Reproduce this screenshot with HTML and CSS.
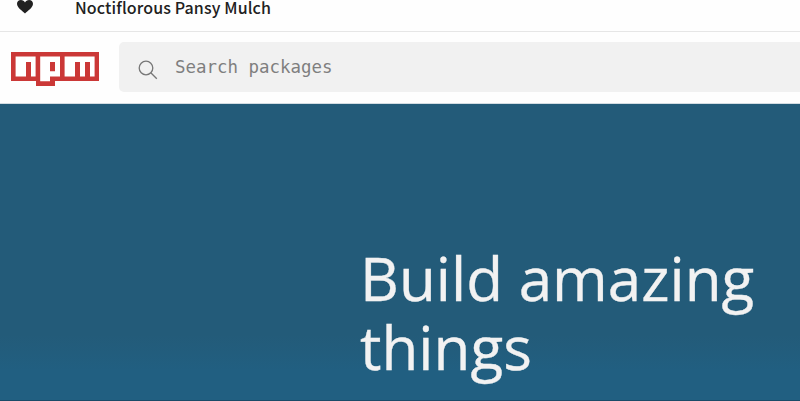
FILE: index.html
```html
<!DOCTYPE html>
<html lang="en">
<head>
<meta charset="utf-8">
<title>npm</title>
<link rel="stylesheet" href="styles.css">
</head>
<body>
<div class="topbar">
  <svg class="heart" viewBox="0 0 16 14"><path d="M8 13.5C5.5 11 0 7.8 0 3.8C0 1.5 1.7 0 3.9 0C5.8 0 7.4 1.2 8 2.5C8.6 1.2 10.2 0 12.1 0C14.3 0 16 1.5 16 3.8C16 7.8 10.5 11 8 13.5Z"/></svg>
  <span class="expansion">Noctiflorous Pansy Mulch</span>
</div>
<header class="header">
  <svg class="logo" viewBox="0 0 88 34" role="img" aria-label="npm"><path fill="#cb3837" d="M0 0h88v29H44v5H25v-5H0z"/><path fill="#fff" fill-rule="evenodd" d="M4.6 4.5H24.6V24.6H20V10H15V24.6H4.6zM29.2 4.5H49V24.6H39V29.3H29.2zM39 10V19.3H44V10zM53.6 4.5H83.6V24.6H79V10H74V24.6H69V10H64V24.6H53.6z"/></svg>
  <div class="search">
    <svg class="glass" viewBox="0 0 20 20"><circle cx="8" cy="8" r="6.8"/><path d="M12.8 12.8L18.8 18.8"/></svg>
    <span class="placeholder">Search packages</span>
  </div>
</header>
<main class="hero">
  <h1>Build amazing things</h1>
</main>
</body>
</html>
```
FILE: styles.css
```css
* { box-sizing: border-box; }
body { margin: 0; height: 401px; overflow: hidden; background: #fefefe; }
.topbar { display: flex; height: 32px; border-bottom: 1px solid #e6e6e6; padding-left: 17px; }
.heart { width: 16px; height: 14px; fill: #212121; margin: 0 42px 0 0; flex: none; }
.expansion { font: 500 16px/14px "Noto Sans CJK SC", sans-serif; letter-spacing: .12px; color: #212121; white-space: nowrap; }
.header { display: flex; height: 72px; padding: 10px 0 0 11px; border-bottom: 1px solid #d3dce2; }
.logo { width: 88px; height: 34px; margin: 10px 20px 0 0; flex: none; }
.search { display: flex; flex: 1; height: 50px; background: #f1f1f1; border-radius: 5px 0 0 5px; padding-left: 19px; }
.glass { width: 20px; height: 20px; margin: 17.5px 17px 0 0; fill: none; stroke: #777; stroke-width: 1.3; flex: none; }
.placeholder { font: 17.45px/50px "DejaVu Sans Mono", monospace; color: #7f7f7f; white-space: nowrap; }
.hero { height: 297px; background: linear-gradient(#235b79 78%, #215f81 90%); border-bottom: 1px solid #194b68; padding: 140px 0 0 360px; }
h1 { margin: 0; width: 420px; font: 400 60.2px/69px "Open Sans", sans-serif; -webkit-text-stroke: .35px #f2f2f2; color: #f2f2f2; }
```
